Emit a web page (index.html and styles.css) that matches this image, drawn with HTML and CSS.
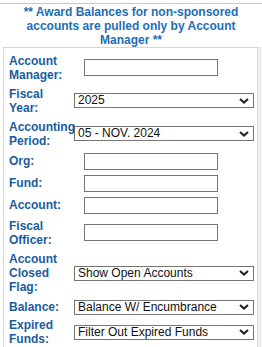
FILE: index.html
```html
<!DOCTYPE html>
<html lang="en">
<head>
  <meta charset="UTF-8" />
  <meta name="viewport" content="width=device-width, initial-scale=1.0" />
  <title>Award Balances</title>
  <link rel="stylesheet" href="styles.css">
</head>
<body>
  <div class="topbar"></div>
  <p class="notice">** Award Balances for non-sponsored accounts are pulled only by Account Manager **</p>

  <div class="panel">
    <table class="filters">
      <tr>
        <td class="lbl"><label for="acctMgr">Account Manager:</label></td>
        <td><input type="text" id="acctMgr" /></td>
      </tr>
      <tr>
        <td class="lbl"><label for="fiscalYear">Fiscal Year:</label></td>
        <td>
          <select id="fiscalYear">
            <option>2025</option>
            <option>2024</option>
          </select>
        </td>
      </tr>
      <tr>
        <td class="lbl"><label for="period">Accounting Period:</label></td>
        <td>
          <select id="period">
            <option>05 - NOV. 2024</option>
          </select>
        </td>
      </tr>
      <tr>
        <td class="lbl"><label for="org">Org:</label></td>
        <td><input type="text" id="org" /></td>
      </tr>
      <tr>
        <td class="lbl"><label for="fund">Fund:</label></td>
        <td><input type="text" id="fund" /></td>
      </tr>
      <tr>
        <td class="lbl"><label for="account">Account:</label></td>
        <td><input type="text" id="account" /></td>
      </tr>
      <tr>
        <td class="lbl"><label for="officer">Fiscal Officer:</label></td>
        <td><input type="text" id="officer" /></td>
      </tr>
      <tr class="tall">
        <td class="lbl"><label for="closedFlag">Account Closed Flag:</label></td>
        <td>
          <select id="closedFlag">
            <option>Show Open Accounts</option>
            <option>Show Closed Accounts</option>
          </select>
        </td>
      </tr>
      <tr>
        <td class="lbl"><label for="balance">Balance:</label></td>
        <td>
          <select id="balance">
            <option>Balance W/ Encumbrance</option>
            <option>Balance W/O Encumbrance</option>
          </select>
        </td>
      </tr>
      <tr class="last">
        <td class="lbl"><label for="expired">Expired Funds:</label></td>
        <td>
          <select id="expired">
            <option>Filter Out Expired Funds</option>
            <option>Show Expired Funds</option>
          </select>
        </td>
      </tr>
    </table>
  </div>
</body>
</html>
```

FILE: styles.css
```css
body {
  margin: 0;
  font-family: "Liberation Sans", Arial, sans-serif;
  background: #fff;
}
.topbar {
  height: 3px;
  border-bottom: 1px solid #c8c8c8;
}
.notice {
  margin: 1px 0 0;
  padding: 0 18px;
  text-align: center;
  color: #1f6db4;
  font-weight: bold;
  font-size: 12px;
  line-height: 14px;
}
.panel {
  margin: 0 4px 0 3px;
  border: 1px solid #d6d6d6;
  box-shadow: 4px 0 0 #efefef;
  padding-top: 3px;
}
.filters {
  border-collapse: collapse;
}
.filters td {
  padding: 2.5px 0;
  vertical-align: middle;
}
.filters .tall td {
  padding: 3px 0;
}
.filters .last td {
  padding-top: 1px;
}
.filters td.lbl {
  padding-left: 5px;
}
.filters label {
  display: block;
  width: 64px;
  color: #1a5c9e;
  font-weight: bold;
  font-size: 12px;
  line-height: 14px;
}
input[type="text"] {
  display: block;
  margin-left: 11px;
  width: 134px;
  height: 17px;
  box-sizing: border-box;
  border: 1px solid #767676;
  padding: 0 3px;
  font: 12px "Liberation Sans", Arial, sans-serif;
}
select {
  display: block;
  margin-left: 1px;
  width: 180px;
  height: 15px;
  box-sizing: border-box;
  border: 1px solid #767676;
  border-radius: 0;
  padding: 0 16px 0 3px;
  font: 12px "Liberation Sans", Arial, sans-serif;
  line-height: 13px;
  color: #111;
  -webkit-appearance: none;
  appearance: none;
  background: #fff url("data:image/svg+xml,%3Csvg xmlns='http://www.w3.org/2000/svg' width='10' height='6'%3E%3Cpolyline points='1,1 5,4.6 9,1' fill='none' stroke='%23222' stroke-width='2'/%3E%3C/svg%3E") no-repeat right 4px center;
}
```
